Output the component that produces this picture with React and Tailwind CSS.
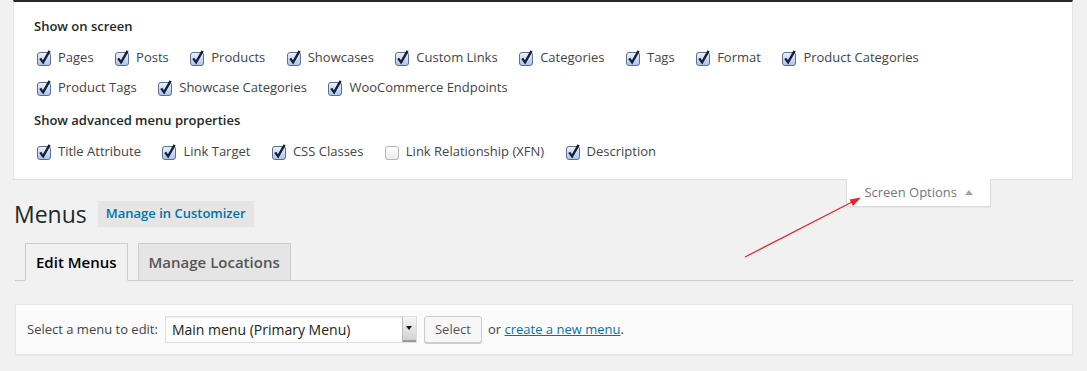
import React from 'react';

function Check({ checked = true }) {
    return (
        <svg width="14" height="16" viewBox="0 0 14 16" className="mr-[7px] shrink-0 overflow-visible">
            <defs>
                <linearGradient id="cbOn" x1="0" y1="0" x2="0" y2="1">
                    <stop offset="0" stopColor="#eef3fb" />
                    <stop offset="1" stopColor="#a9c4ec" />
                </linearGradient>
                <linearGradient id="cbOff" x1="0" y1="0" x2="0" y2="1">
                    <stop offset="0" stopColor="#ffffff" />
                    <stop offset="1" stopColor="#ebebeb" />
                </linearGradient>
            </defs>
            <rect
                x="0.5"
                y="2.5"
                width="13"
                height="13"
                rx="2.5"
                fill={checked ? 'url(#cbOn)' : 'url(#cbOff)'}
                stroke={checked ? '#5d6f8f' : '#b5b5b5'}
            />
            {checked && (
                <path
                    d="M3.2 8.4 L6.1 12.4 L12.6 0.8"
                    fill="none"
                    stroke="#17203a"
                    strokeWidth="2.4"
                    strokeLinejoin="miter"
                />
            )}
        </svg>
    );
}

function Option({ label, checked = true }) {
    return (
        <label className="flex items-center mr-[21.5px] text-[13px] text-[#444]">
            <Check checked={checked} />
            <span>{label}</span>
        </label>
    );
}

const row1 = ['Pages', 'Posts', 'Products', 'Showcases', 'Custom Links', 'Categories', 'Tags', 'Format', 'Product Categories'];
const row2 = ['Product Tags', 'Showcase Categories', 'WooCommerce Endpoints'];

export default function App() {
    return (
        <div className="relative w-full h-[371px] overflow-hidden bg-[#f1f1f1] pl-[13px] pr-[14px] font-['Open_Sans',sans-serif]">
            {/* Screen options panel */}
            <div className="bg-white border-t-2 border-t-[#23282d] border-x border-x-[#e5e5e5] border-b border-b-[#dcdcdc] pl-[20px] pt-[15px] pb-[12px]">
                <div className="h-[18px] leading-[18px] text-[13px] font-semibold text-[#23282d]">Show on screen</div>
                <div className="pl-[3px] mt-[8px]">
                    <div className="flex items-center h-[30px]">
                        {row1.map((l) => (
                            <Option key={l} label={l} />
                        ))}
                    </div>
                    <div className="flex items-center h-[30px]">
                        {row2.map((l) => (
                            <Option key={l} label={l} />
                        ))}
                    </div>
                </div>
                <div className="h-[18px] leading-[18px] mt-[8px] text-[13px] font-semibold text-[#23282d]">Show advanced menu properties</div>
                <div className="pl-[3px] mt-[8px] flex items-center h-[30px]">
                    <Option label="Title Attribute" />
                    <Option label="Link Target" />
                    <Option label="CSS Classes" />
                    <Option label="Link Relationship (XFN)" checked={false} />
                    <Option label="Description" />
                </div>
            </div>

            {/* Title row + screen options tab */}
            <div className="flex justify-between items-start">
                <div className="flex items-center h-[26px] mt-[21px] ml-px">
                    <h1 className="text-[23px] leading-[26px] font-normal text-[#23282d]">Menus</h1>
                    <button className="ml-[11px] h-[26px] px-[8px] bg-[#e5e5e5] text-[13px] font-semibold text-[#0073aa]">
                        Manage in Customizer
                    </button>
                </div>
                <div className="-mt-px mr-[82px] h-[28px] flex items-center pl-[17px] pr-[17px] bg-white border-x border-b border-[#ddd] shadow-[0_1px_1px_rgba(0,0,0,0.04)] text-[13px] text-[#72777c]">
                    <span>Screen Options</span>
                    <span className="ml-[8px] w-0 h-0 border-x-[4px] border-x-transparent border-b-[5px] border-b-[#a0a5aa]"></span>
                </div>
            </div>

            {/* Tabs */}
            <div className="ml-[2px] mt-[16px] flex items-end border-b border-[#ccc] pl-[10px]">
                <div className="-mb-px h-[38px] px-[10px] flex items-center border border-[#ccc] border-b-[#f1f1f1] bg-[#f1f1f1] text-[15px] font-semibold text-[#000]">
                    Edit Menus
                </div>
                <div className="ml-[10px] h-[37px] px-[10px] flex items-center border border-b-0 border-[#ccc] bg-[#e5e5e5] text-[15px] font-semibold text-[#555]">
                    Manage Locations
                </div>
            </div>

            {/* Select menu box */}
            <div className="ml-[2px] mt-[23px] h-[51px] flex items-center px-[11px] bg-[#fbfbfb] border border-[#e5e5e5] shadow-[0_1px_1px_rgba(0,0,0,0.04)] text-[13px] text-[#444]">
                <span>Select a menu to edit:</span>
                <div className="ml-[7px] w-[252px] h-[27px] flex items-stretch bg-white border border-[#ddd] shadow-[inset_0_1px_2px_rgba(0,0,0,0.07)]">
                    <span className="flex-1 flex items-center pl-[6px] text-[14px] text-[#222]">Main menu (Primary Menu)</span>
                    <span className="w-[14px] flex justify-center pt-[9px] bg-gradient-to-b from-[#f6f6f6] to-[#cfcfcf] border-l border-[#b8b8b8] shadow-[inset_0_-2px_0_#9a9a9a]">
                        <span className="w-0 h-0 border-x-[3px] border-x-transparent border-t-[4px] border-t-[#111]"></span>
                    </span>
                </div>
                <button className="ml-[7px] w-[58px] h-[27px] rounded-[3px] border border-[#ccc] bg-[#f7f7f7] shadow-[0_1px_0_#ccc] text-[13px] text-[#555]">
                    Select
                </button>
                <span className="ml-[6px]">
                    or{' '}
                    <a href="#" className="text-[#0073aa] underline">
                        create a new menu
                    </a>
                    .
                </span>
            </div>

            {/* red annotation arrow */}
            <svg className="absolute left-0 top-0 pointer-events-none" width="1087" height="371">
                <line x1="745" y1="257" x2="852" y2="202" stroke="#e3262b" strokeWidth="1.2" />
                <polygon points="861,197.5 849.5,199.5 853,206" fill="#e3262b" />
            </svg>
        </div>
    );
}
